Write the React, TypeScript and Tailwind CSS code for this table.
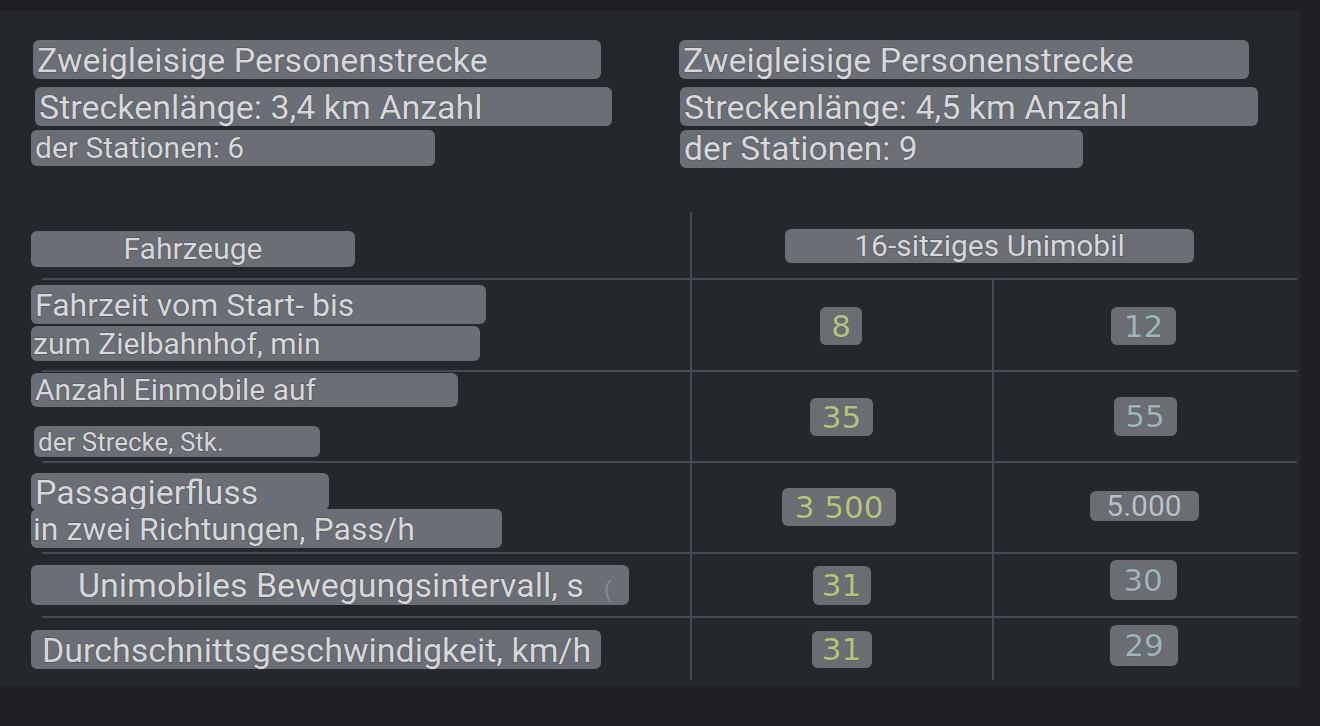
import React from "react";

const stroke =
  "[-webkit-text-stroke:1px_#4a4d52] [paint-order:stroke_fill] text-[#d6d8db]";

function Label({
  className,
  textClass,
  children,
}: {
  className: string;
  textClass: string;
  children: React.ReactNode;
}) {
  return (
    <div
      className={`flex items-center rounded-[6px] bg-[#6b6e74] whitespace-nowrap ${className}`}
    >
      <span className={`${stroke} leading-none ${textClass}`}>{children}</span>
    </div>
  );
}

function Value({
  className,
  textClass,
  children,
}: {
  className: string;
  textClass: string;
  children: React.ReactNode;
}) {
  return (
    <div
      className={`flex items-center justify-center rounded-[6px] bg-[#6a6d72] whitespace-nowrap ${className}`}
    >
      <span
        className={`leading-none [-webkit-text-stroke:1px_#5a5e62] [paint-order:stroke_fill] ${textClass}`}
      >
        {children}
      </span>
    </div>
  );
}

const dv = "font-['DejaVu_Sans',sans-serif] text-[31px] font-normal";
const green = "text-[#b5c47c]";
const blue = "text-[#a0b4bb]";
const line = "border-[#454b55]";

export default function App() {
  return (
    <div
      className="w-[1320px] h-[726px] bg-[#1e2024] pt-[11px] overflow-hidden"
      style={{ fontFamily: "Roboto, 'Noto Sans', sans-serif" }}
    >
      <div className="w-[1300px] h-[676px] bg-[#24282d] flex flex-col">
        {/* top section */}
        <div className="flex pt-[29px] h-[201px]">
          <div className="w-[647px] pl-[31px] flex flex-col items-start">
            <Label
              className="ml-[2px] w-[568px] h-[39px] pl-[4px]"
              textClass="text-[34px]"
            >
              Zweigleisige Personenstrecke
            </Label>
            <Label
              className="ml-[4px] mt-[8px] w-[577px] h-[39px] pl-[4px]"
              textClass="text-[34px]"
            >
              Streckenlänge: 3,4 km Anzahl
            </Label>
            <Label
              className="mt-[4px] w-[404px] h-[36px] pl-[4px]"
              textClass="text-[30px]"
            >
              der Stationen: 6
            </Label>
          </div>
          <div className="flex-1 flex flex-col items-start pl-[32px]">
            <Label className="w-[570px] h-[39px] pl-[4px]" textClass="text-[34px]">
              Zweigleisige Personenstrecke
            </Label>
            <Label
              className="ml-[1px] mt-[8px] w-[578px] h-[39px] pl-[4px]"
              textClass="text-[34px]"
            >
              Streckenlänge: 4,5 km Anzahl
            </Label>
            <Label
              className="ml-[1px] mt-[4px] w-[403px] h-[38px] pl-[4px]"
              textClass="text-[33.5px]"
            >
              der Stationen: 9
            </Label>
          </div>
        </div>

        {/* table */}
        <div className="ml-[42px] w-[1255px] grid grid-cols-[648px_302px_305px] grid-rows-[66px_92px_91px_91px_64px_64px]">
          {/* header */}
          <div className="pt-[19px]">
            <Label
              className="-ml-[11px] w-[324px] h-[36px] justify-center"
              textClass="text-[30px]"
            >
              Fahrzeuge
            </Label>
          </div>
          <div className={`col-span-2 border-l-2 ${line} pt-[17px] flex justify-center`}>
            <Label className="-ml-[10px] w-[409px] h-[34px] justify-center" textClass="text-[30px]">
              16-sitziges Unimobil
            </Label>
          </div>

          {/* row 1 */}
          <div className={`border-t-2 ${line} pt-[5px] flex flex-col items-start`}>
            <Label className="-ml-[11px] w-[455px] h-[39px] pl-[4px]" textClass="text-[32px]">
              Fahrzeit vom Start- bis
            </Label>
            <Label
              className="-ml-[11px] mt-[2px] w-[449px] h-[35px] pl-[2px]"
              textClass="text-[30px]"
            >
              zum Zielbahnhof, min
            </Label>
          </div>
          <div className={`border-t-2 border-l-2 ${line} pt-[27px] flex justify-center items-start`}>
            <Value className="w-[42px] h-[38px] -ml-[2px]" textClass={`${dv} ${green}`}>
              8
            </Value>
          </div>
          <div className={`border-t-2 border-l-2 ${line} pt-[27px] flex justify-center items-start`}>
            <Value className="w-[65px] h-[38px] -ml-[4px]" textClass={`${dv} ${blue}`}>
              12
            </Value>
          </div>

          {/* row 2 */}
          <div className={`border-t-2 ${line} pt-[1px] flex flex-col items-start`}>
            <Label className="-ml-[11px] w-[427px] h-[34px] pl-[4px]" textClass="text-[30px]">
              Anzahl Einmobile auf
            </Label>
            <Label
              className="-ml-[8px] mt-[19px] w-[286px] h-[31px] pl-[4px]"
              textClass="text-[26px]"
            >
              der Strecke, Stk.
            </Label>
          </div>
          <div className={`border-t-2 border-l-2 ${line} pt-[26px] flex justify-center items-start`}>
            <Value className="w-[63px] h-[38px] -ml-[1px]" textClass={`${dv} ${green}`}>
              35
            </Value>
          </div>
          <div className={`border-t-2 border-l-2 ${line} pt-[25px] flex justify-center items-start`}>
            <Value className="w-[63px] h-[39px] -ml-[1px]" textClass={`${dv} ${blue}`}>
              55
            </Value>
          </div>

          {/* row 3 */}
          <div className={`border-t-2 ${line} pt-[10px] flex flex-col items-start`}>
            <Label className="-ml-[11px] w-[298px] h-[37px] pl-[4px]" textClass="text-[34px]">
              Passagierfluss
            </Label>
            <Label
              className="-ml-[11px] -mt-[1px] w-[471px] h-[39px] pl-[2px]"
              textClass="text-[32px]"
            >
              in zwei Richtungen, Pass/h
            </Label>
          </div>
          <div className={`border-t-2 border-l-2 ${line} pt-[25px] flex justify-center items-start`}>
            <Value className="w-[114px] h-[38px] -ml-[6px]" textClass={`${dv} ${green}`}>
              3 500
            </Value>
          </div>
          <div className={`border-t-2 border-l-2 ${line} pt-[28px] flex justify-center items-start`}>
            <Value
              className="w-[109px] h-[30px] -ml-[3px]"
              textClass="text-[30px] text-[#b8c3c9] [-webkit-text-stroke:1px_#4a4f54]"
            >
              5.000
            </Value>
          </div>

          {/* row 4 */}
          <div className={`border-t-2 ${line} pt-[11px] flex flex-col items-start`}>
            <Label className="-ml-[11px] w-[598px] h-[40px] pl-[47px]" textClass="text-[34px]">
              Unimobiles Bewegungsintervall, s
              <span className="ml-[20px] text-[22px] text-[#8a8d92] [-webkit-text-stroke:0px_transparent]">
                (
              </span>
            </Label>
          </div>
          <div className={`border-t-2 border-l-2 ${line} pt-[12px] flex justify-center items-start`}>
            <Value className="w-[58px] h-[39px] -ml-[1px]" textClass={`${dv} ${green}`}>
              31
            </Value>
          </div>
          <div className={`border-t-2 border-l-2 ${line} pt-[6px] flex justify-center items-start`}>
            <Value className="w-[67px] h-[40px] -ml-[5px]" textClass={`${dv} ${blue}`}>
              30
            </Value>
          </div>

          {/* row 5 */}
          <div className={`border-t-2 ${line} pt-[12px] flex flex-col items-start`}>
            <Label className="-ml-[11px] w-[570px] h-[39px] pl-[11px]" textClass="text-[34px]">
              Durchschnittsgeschwindigkeit, km/h
            </Label>
          </div>
          <div className={`border-t-2 border-l-2 ${line} pt-[13px] flex justify-center items-start`}>
            <Value className="w-[60px] h-[37px] -ml-[1px]" textClass={`${dv} ${green}`}>
              31
            </Value>
          </div>
          <div className={`border-t-2 border-l-2 ${line} pt-[7px] flex justify-center items-start`}>
            <Value className="w-[68px] h-[41px] -ml-[3px]" textClass={`${dv} ${blue}`}>
              29
            </Value>
          </div>
        </div>
      </div>
    </div>
  );
}
